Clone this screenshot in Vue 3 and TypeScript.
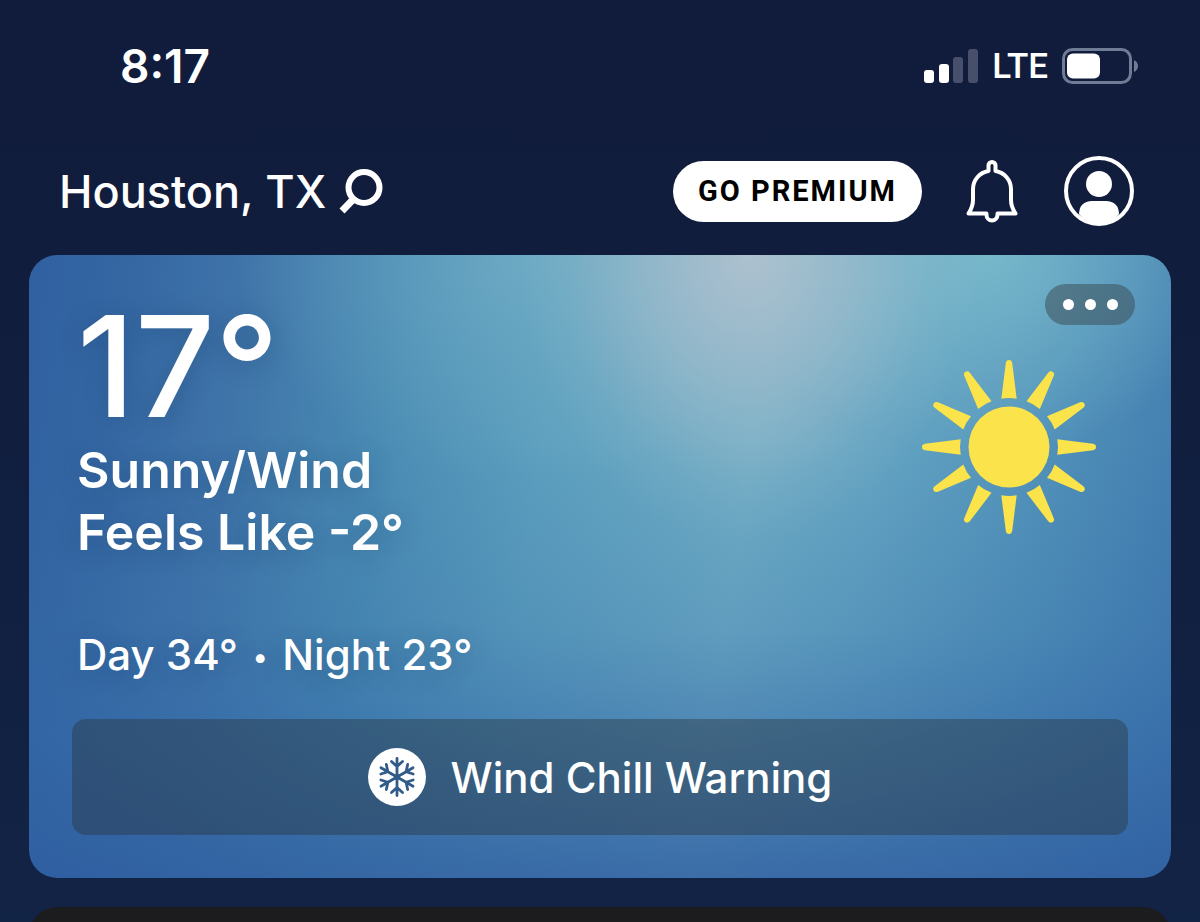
<script setup lang="ts">
const rays: number[] = Array.from({ length: 12 }, (_, i) => i * 30)
const arms: number[] = Array.from({ length: 6 }, (_, i) => i * 60)
const conditions: string[] = ['Sunny/Wind', 'Feels Like -2°']
</script>

<template>
  <div class="screen">
    <div class="status">
      <time class="clock">8:17</time>
      <div class="signals">
        <svg class="bars" width="54" height="34" viewBox="0 0 54 34" aria-hidden="true">
          <rect x="0" y="21" width="10" height="13" rx="3" fill="#fff" />
          <rect x="15" y="15" width="10" height="19" rx="3" fill="#fff" />
          <rect x="29" y="8" width="10" height="26" rx="3" fill="#474f6b" />
          <rect x="44" y="0" width="10" height="34" rx="3" fill="#474f6b" />
        </svg>
        <span class="network">LTE</span>
        <svg class="battery" width="78" height="36" viewBox="0 0 78 36" aria-hidden="true">
          <rect x="1.5" y="1.5" width="67" height="33" rx="9" fill="none" stroke="#707b96" stroke-width="3" />
          <rect x="5" y="5.5" width="33" height="25" rx="6" fill="#fff" />
          <path d="M72 12 Q76 14 76 18 Q76 22 72 24Z" fill="#707b96" />
        </svg>
      </div>
    </div>

    <header class="header">
      <button class="location" type="button">
        <span>Houston, TX</span>
        <svg width="46" height="46" viewBox="0 0 46 46" aria-hidden="true">
          <circle cx="26" cy="19.5" r="15.5" fill="none" stroke="#fff" stroke-width="6" />
          <path d="M16 30.500 L4 43" fill="none" stroke="#fff" stroke-width="7" />
        </svg>
      </button>
      <div class="actions">
        <button class="premium" type="button">GO PREMIUM</button>
        <button class="icon bell" type="button" aria-label="Notifications">
          <svg width="52" height="64" viewBox="0 0 52 64" fill="none" stroke="#fff" stroke-width="4" stroke-linejoin="round">
            <path d="M22.500 12 V6.500 A3.500 3.500 0 0 1 29.500 6.500 V12 C38.500 13.500 45 21 45 30 V41 C45 47 46.500 50 49.500 54.500 H31.500 V56 A5.500 5.500 0 0 1 20.500 56 V54.500 H2.500 C5.500 50 7 47 7 41 V30 C7 21 13.500 13.500 22.500 12Z" />
          </svg>
        </button>
        <button class="icon" type="button" aria-label="Profile">
          <svg width="70" height="70" viewBox="0 0 70 70">
            <circle cx="35" cy="35" r="33" fill="none" stroke="#fff" stroke-width="4" />
            <circle cx="35" cy="28" r="13" fill="#fff" />
            <path d="M15 58 C15 50 20 45 28 45 H42 C50 45 55 50 55 58 C49 66 42 69 35 69 S21 66 15 58Z" fill="#fff" />
          </svg>
        </button>
      </div>
    </header>

    <main class="card">
      <div class="top">
        <section class="info">
          <h1 class="temp">17°</h1>
          <p v-for="line in conditions" :key="line" class="condition">{{ line }}</p>
          <p class="range">Day 34° <span class="bullet">•</span> Night 23°</p>
        </section>
        <div class="side">
          <button class="more" type="button" aria-label="More options">
            <i class="dot"></i><i class="dot"></i><i class="dot"></i>
          </button>
          <svg class="sun" width="174" height="174" viewBox="-87 -87 174 174" role="img" aria-label="Sunny">
            <circle r="40.5" fill="#fae34b" />
            <path
              v-for="angle in rays"
              :key="angle"
              :transform="`rotate(${angle})`"
              d="M-7.700 -48.300 L-3.200 -84 Q-2.700 -87 0 -87 Q2.700 -87 3.200 -84 L7.700 -48.300 Q0 -49.700 -7.700 -48.300Z"
              fill="#fae34b"
            />
          </svg>
        </div>
      </div>
      <button class="alert" type="button">
        <svg width="58" height="58" viewBox="-29 -29 58 58" aria-hidden="true">
          <circle r="29" fill="#fff" />
          <g fill="none" stroke="#315b88" stroke-width="2.800" stroke-linecap="round" stroke-linejoin="round">
            <path v-for="angle in arms" :key="angle" :transform="`rotate(${angle})`" d="M0 0 V-18.500 M-5.500 -15.500 L0 -10.500 L5.500 -15.500" />
          </g>
          <circle r="3" fill="#315b88" />
        </svg>
        <span>Wind Chill Warning</span>
      </button>
    </main>

    <section class="next" aria-hidden="true"></section>
  </div>
</template>

<style>
body {
  background: #122345;
}
</style>

<style scoped>
.screen {
  box-sizing: border-box;
  min-height: 100vh;
  display: flex;
  flex-direction: column;
  padding: 0 29px;
  overflow: hidden;
  color: #fff;
  font-family: Inter, "Liberation Sans", sans-serif;
  background: linear-gradient(#111c3c 0%, #111d3d 30%, #122446 100%);
}
button {
  margin: 0;
  padding: 0;
  border: 0;
  background: none;
  color: inherit;
  font: inherit;
  cursor: pointer;
}
svg {
  display: block;
  flex: none;
}
h1,
p {
  margin: 0;
}
.status {
  display: flex;
  align-items: center;
  justify-content: space-between;
  height: 132px;
  padding: 0 31px 0 91px;
}
.clock {
  font-size: 46px;
  font-weight: 600;
}
.signals {
  display: flex;
  align-items: center;
}
.network {
  margin: 0 14px;
  font-family: Roboto, sans-serif;
  font-size: 35px;
  font-weight: 500;
}
.header {
  display: flex;
  align-items: center;
  justify-content: space-between;
  height: 118px;
  padding: 0 37px 0 30px;
  margin-bottom: 5px;
}
.location {
  display: flex;
  align-items: center;
  gap: 12px;
  font-size: 45px;
  font-weight: 500;
}
.actions {
  display: flex;
  align-items: center;
}
.premium {
  height: 61px;
  padding: 0 25px;
  border-radius: 31px;
  background: #fff;
  color: #000;
  font-family: Roboto, sans-serif;
  font-size: 29px;
  font-weight: 700;
  letter-spacing: 2px;
}
.bell {
  margin: 0 46px 0 44px;
}
.card {
  display: flex;
  flex-direction: column;
  gap: 34px;
  padding: 29px 43px 43px;
  border-radius: 28px;
  background:
    radial-gradient(ellipse 20% 46% at 63% 0%, rgba(184, 196, 208, 0.85), rgba(178, 194, 207, 0.5) 45%, rgba(170, 190, 205, 0.12) 80%, rgba(170, 190, 205, 0) 100%),
    radial-gradient(ellipse 22% 32% at 84% 0%, rgba(132, 196, 208, 0.7), rgba(125, 192, 207, 0)),
    radial-gradient(ellipse 26% 36% at 44% 0%, rgba(130, 186, 204, 0.5), rgba(120, 182, 202, 0)),
    linear-gradient(180deg, rgba(47, 97, 163, 0) 30%, rgba(52, 108, 168, 0.25) 60%, rgba(50, 102, 166, 0.55) 78%, rgba(46, 93, 160, 0.8) 100%),
    linear-gradient(98deg, #3160a1 0%, #3365a2 6%, #3f74a9 18%, #4a8cb4 31%, #5c9fbe 44%, #6fadc5 61%, #64a4c2 71%, #5191b9 85%, #3f78ae 100%);
}
.top {
  display: flex;
  justify-content: space-between;
}
.info {
  padding-left: 5px;
  text-shadow: 0 4px 24px rgba(20, 55, 95, 0.3);
}
.temp {
  margin-top: 12px;
  font-size: 140px;
  font-weight: 500;
  line-height: 140px;
}
.condition {
  font-size: 50px;
  font-weight: 600;
  line-height: 62px;
}
.temp + .condition {
  margin-top: 3px;
}
.range {
  margin-top: 62px;
  font-size: 42px;
  font-weight: 500;
  line-height: 60px;
}
.bullet {
  display: inline-block;
  width: 22px;
  font-size: 28px;
  line-height: 1;
  text-align: center;
  vertical-align: 3px;
}
.side {
  display: flex;
  flex-direction: column;
  align-items: flex-end;
  gap: 35px;
}
.more {
  display: flex;
  align-items: center;
  justify-content: center;
  gap: 11px;
  width: 90px;
  height: 41px;
  margin-right: -7px;
  border-radius: 21px;
  background: rgba(60, 80, 90, 0.55);
}
.dot {
  width: 11px;
  height: 11px;
  border-radius: 50%;
  background: #fff;
}
.sun {
  margin-right: 32px;
}
.alert {
  display: flex;
  align-items: center;
  justify-content: center;
  gap: 25px;
  height: 116px;
  border-radius: 14px;
  background: rgba(40, 50, 55, 0.4);
  font-size: 42px;
  font-weight: 500;
}
.next {
  flex: 1;
  min-height: 14px;
  margin-top: 29px;
  overflow: hidden;
}
.next::before {
  content: "";
  display: block;
  height: 60px;
  border-radius: 28px 28px 0 0;
  background: #1c1c1e;
}
</style>
